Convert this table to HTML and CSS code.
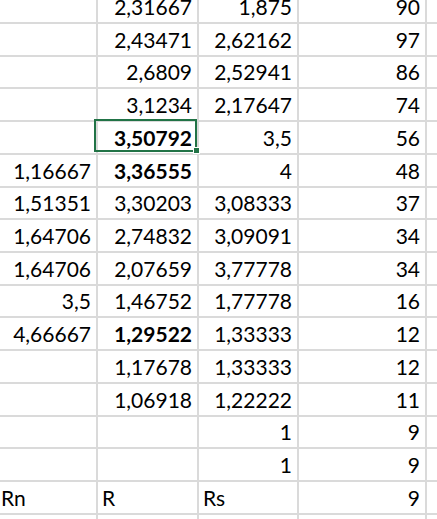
FILE: index.html
```html
<!DOCTYPE html>
<html>
<head>
<meta charset="utf-8">
<link rel="stylesheet" href="styles.css">
</head>
<body>
<div class="sheet">
  <div class="c"></div><div class="c">2,31667</div><div class="c">1,875</div><div class="c">90</div><div class="c e"></div>
  <div class="c"></div><div class="c">2,43471</div><div class="c">2,62162</div><div class="c">97</div><div class="c e"></div>
  <div class="c"></div><div class="c">2,6809</div><div class="c">2,52941</div><div class="c">86</div><div class="c e"></div>
  <div class="c"></div><div class="c">3,1234</div><div class="c">2,17647</div><div class="c">74</div><div class="c e"></div>
  <div class="c"></div><div class="c b sel">3,50792<span class="handle"></span></div><div class="c">3,5</div><div class="c">56</div><div class="c e"></div>
  <div class="c">1,16667</div><div class="c b">3,36555</div><div class="c">4</div><div class="c">48</div><div class="c e"></div>
  <div class="c">1,51351</div><div class="c">3,30203</div><div class="c">3,08333</div><div class="c">37</div><div class="c e"></div>
  <div class="c">1,64706</div><div class="c">2,74832</div><div class="c">3,09091</div><div class="c">34</div><div class="c e"></div>
  <div class="c">1,64706</div><div class="c">2,07659</div><div class="c">3,77778</div><div class="c">34</div><div class="c e"></div>
  <div class="c">3,5</div><div class="c">1,46752</div><div class="c">1,77778</div><div class="c">16</div><div class="c e"></div>
  <div class="c">4,66667</div><div class="c b">1,29522</div><div class="c">1,33333</div><div class="c">12</div><div class="c e"></div>
  <div class="c"></div><div class="c">1,17678</div><div class="c">1,33333</div><div class="c">12</div><div class="c e"></div>
  <div class="c"></div><div class="c">1,06918</div><div class="c">1,22222</div><div class="c">11</div><div class="c e"></div>
  <div class="c"></div><div class="c"></div><div class="c">1</div><div class="c">9</div><div class="c e"></div>
  <div class="c"></div><div class="c"></div><div class="c">1</div><div class="c">9</div><div class="c e"></div>
  <div class="c l first">Rn</div><div class="c l">R</div><div class="c l">Rs</div><div class="c">9</div><div class="c e"></div>
  <div class="c z"></div><div class="c z"></div><div class="c z"></div><div class="c z"></div><div class="c e z"></div>
</div>
</body>
</html>
```
FILE: styles.css
```css
html, body {
  margin: 0;
  padding: 0;
  background: #fff;
}
body {
  width: 437px;
  height: 519px;
  overflow: hidden;
}
.sheet {
  display: grid;
  grid-template-columns: 98px 101px 100px 128px 10px;
  grid-template-rows: 24px repeat(15, 32.733px) 4px;
  font-family: Lato, "Open Sans", sans-serif;
  font-size: 21px;
  line-height: 20px;
  color: #000;
}
.c {
  box-sizing: border-box;
  border-right: 2px solid #dadada;
  border-bottom: 2px solid #dadada;
  display: flex;
  align-items: flex-end;
  justify-content: flex-end;
  padding: 0 5px 5px 4px;
  white-space: nowrap;
}
.c.z {
  border-bottom: none;
}
.c.e {
  border-right: none;
}
.c.l {
  justify-content: flex-start;
}
.c.l.first {
  padding-left: 1px;
}
.c.b {
  font-weight: bold;
}
.sel {
  position: relative;
}
.sel::after {
  content: "";
  position: absolute;
  top: -3px;
  left: -4px;
  right: 0;
  bottom: 1px;
  border: 2px solid #217346;
  pointer-events: none;
}
.handle {
  position: absolute;
  right: -3px;
  bottom: -1px;
  width: 5px;
  height: 5px;
  background: #217346;
  border: 1px solid #fff;
  z-index: 2;
}
```
